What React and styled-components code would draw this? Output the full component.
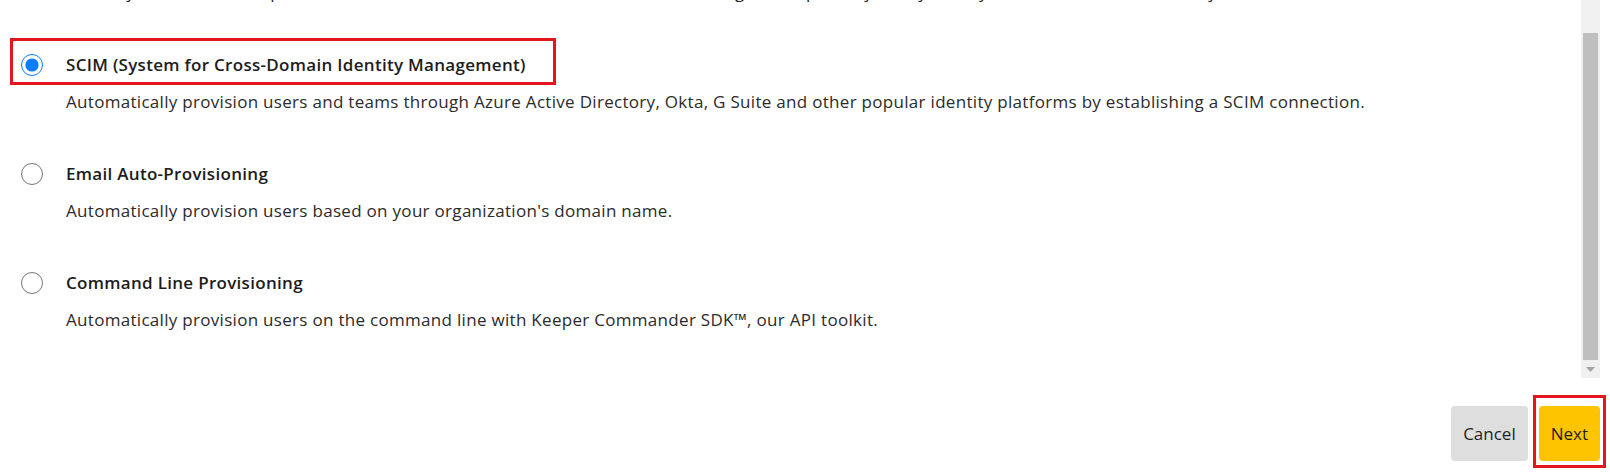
import React, { useEffect, useRef, useState } from "react";
import styled, { createGlobalStyle } from "styled-components";

const GlobalStyle = createGlobalStyle`
  html, body {
    margin: 0;
    padding: 0;
    background: #ffffff;
    font-family: "Open Sans", "Liberation Sans", sans-serif;
    color: #222222;
  }
`;

const Dialog = styled.div`
  width: 1610px;
  height: 474px;
  display: flex;
  flex-direction: column;
  background: #ffffff;
`;

const BodyRow = styled.div`
  height: 378px;
  margin-right: 10px;
  display: flex;
`;

const Body = styled.div`
  flex: 1;
  min-width: 0;
  overflow: hidden;
  box-sizing: border-box;
  padding: 18px 0 46px 0;
`;

const ScrollTrack = styled.div`
  width: 19px;
  flex-shrink: 0;
  display: flex;
  flex-direction: column;
  background: #f0f0f0;
`;

const ScrollRail = styled.div`
  flex: 1;
  position: relative;
`;

const ScrollThumb = styled.div`
  position: absolute;
  left: 2px;
  right: 2px;
  background: #bfbfbf;
`;

const ScrollArrow = styled.div`
  height: 18px;
  display: flex;
  align-items: center;
  justify-content: center;
`;

const Intro = styled.p`
  margin: 0 0 34px 0;
  padding-left: 21px;
  font-size: 17px;
  line-height: 24px;
  letter-spacing: 0.3px;
  color: #222222;
`;

const OptionList = styled.div`
  display: flex;
  flex-direction: column;
  gap: 33px;
`;

const Option = styled.div`
  display: flex;
  flex-direction: column;
  align-items: flex-start;
  padding-left: 10px;
`;

const OptionHeader = styled.label`
  display: inline-flex;
  align-items: center;
  gap: 23px;
  padding: 12px 27px 5px 8px;
  border: 3px solid ${props => (props.marked ? "#e3151e" : "transparent")};
  cursor: pointer;
`;

const Radio = styled.input.attrs({ type: "radio" })`
  width: 22px;
  height: 22px;
  margin: 0;
  accent-color: #0a7cff;
  flex-shrink: 0;
`;

const OptionTitle = styled.span`
  font-size: 17px;
  line-height: 24px;
  font-weight: 600;
  letter-spacing: 0.3px;
  color: #1c1c1c;
`;

const OptionText = styled.div`
  margin: 5px 0 0 56px;
  font-size: 17px;
  line-height: 24px;
  letter-spacing: 0.3px;
  color: #2b2b2b;
`;

const Footer = styled.div`
  flex: 1;
  display: flex;
  justify-content: flex-end;
  align-items: flex-start;
  padding: 28px 4px 0 0;
`;

const Callout = styled.div`
  margin: -11px 0 0 5px;
  padding: 8px 3px 4px 3px;
  border: 3px solid #e3151e;
`;

const Button = styled.button`
  height: 55px;
  padding: 0 12px;
  border: none;
  border-radius: 4px;
  font-family: "Open Sans", "Liberation Sans", sans-serif;
  font-size: 17px;
  color: #1f1f1f;
  background: ${props => (props.primary ? "#ffc400" : "#dedede")};
  cursor: pointer;
`;

const options = [
  {
    id: "scim",
    title: "SCIM (System for Cross-Domain Identity Management)",
    text:
      "Automatically provision users and teams through Azure Active Directory, Okta, G Suite and other popular identity platforms by establishing a SCIM connection.",
  },
  {
    id: "email",
    title: "Email Auto-Provisioning",
    text: "Automatically provision users based on your organization's domain name.",
  },
  {
    id: "commander",
    title: "Command Line Provisioning",
    text:
      "Automatically provision users on the command line with Keeper Commander SDK\u2122, our API toolkit.",
  },
];

const RAIL_HEIGHT = 360;

const App = () => {
  const [method, setMethod] = useState("scim");
  const [thumb, setThumb] = useState({ top: 33, height: 327 });
  const bodyRef = useRef(null);

  useEffect(() => {
    const el = bodyRef.current;
    if (!el) return;
    el.scrollTop = el.scrollHeight;
    const ratio = RAIL_HEIGHT / el.scrollHeight;
    setThumb({
      top: Math.round(el.scrollTop * ratio),
      height: Math.round(el.clientHeight * ratio),
    });
  }, []);

  return (
    <>
      <GlobalStyle />
      <Dialog>
        <BodyRow>
          <Body ref={bodyRef}>
            <Intro>
              Choose how you would like to provision users into this node. Each method can be configured separately, and you may add another method at any time.
            </Intro>
            <OptionList>
              {options.map(item => (
                <Option key={item.id}>
                  <OptionHeader marked={item.id === "scim"}>
                    <Radio
                      name="method"
                      checked={method === item.id}
                      onChange={() => setMethod(item.id)}
                    />
                    <OptionTitle>{item.title}</OptionTitle>
                  </OptionHeader>
                  <OptionText>{item.text}</OptionText>
                </Option>
              ))}
            </OptionList>
          </Body>
          <ScrollTrack>
            <ScrollRail>
              <ScrollThumb style={{ top: thumb.top, height: thumb.height }} />
            </ScrollRail>
            <ScrollArrow>
              <svg width="9" height="5" viewBox="0 0 9 5">
                <polygon points="0,0 9,0 4.5,5" fill="#a3a3a3" />
              </svg>
            </ScrollArrow>
          </ScrollTrack>
        </BodyRow>
        <Footer>
          <Button>Cancel</Button>
          <Callout>
            <Button primary>Next</Button>
          </Callout>
        </Footer>
      </Dialog>
    </>
  );
};

export default App;
